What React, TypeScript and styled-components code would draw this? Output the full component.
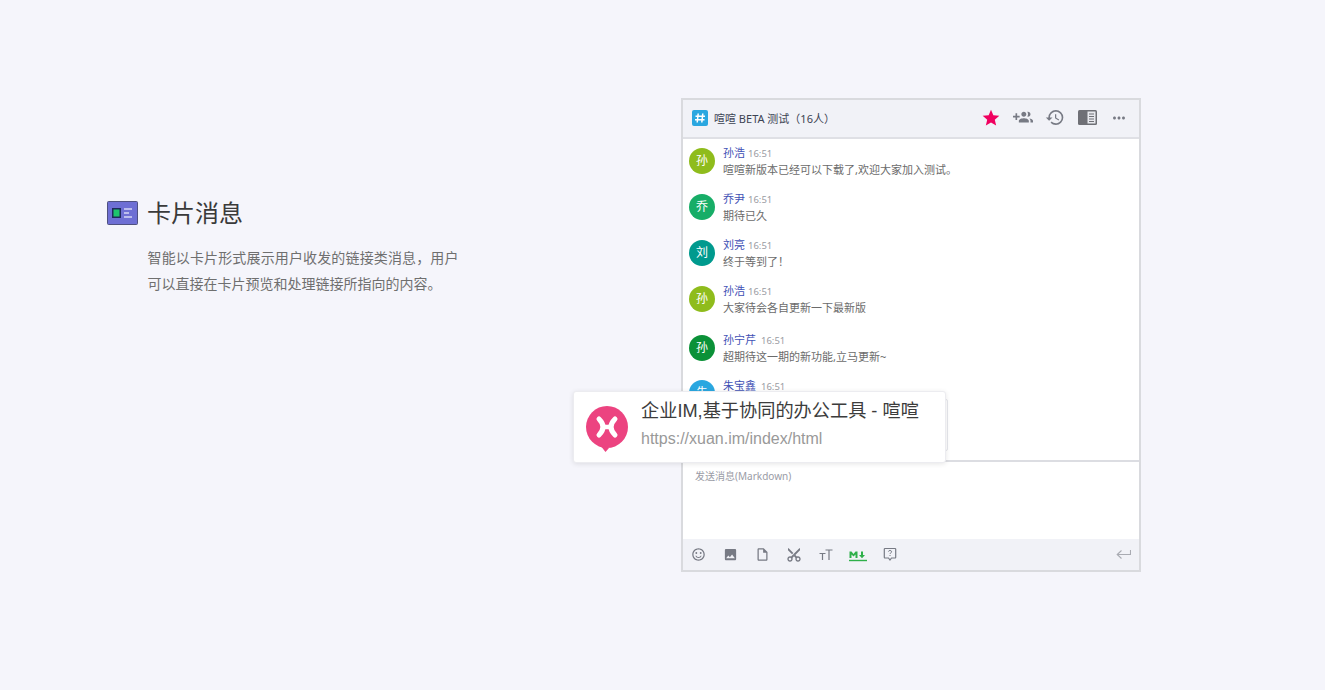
import styled, { createGlobalStyle } from 'styled-components';
import {
  MdStar,
  MdHistory,
  MdMoreHoriz,
  MdOutlineSentimentSatisfied,
  MdImage,
  MdOutlineInsertDriveFile,
  MdContentCut,
} from 'react-icons/md';

const GlobalStyle = createGlobalStyle`
  html, body {
    margin: 0;
    padding: 0;
    background: #f5f5fb;
  }
  * {
    box-sizing: border-box;
  }
`;

const chatFont = '"Noto Sans", "Noto Sans CJK SC", sans-serif';
const cardFont = '"Liberation Sans", "Noto Sans CJK SC", sans-serif';

const Page = styled.div`
  width: 1325px;
  height: 690px;
  display: flex;
  align-items: flex-start;
  padding: 98px 0 0 107px;
  background: #f5f5fb;
  overflow: hidden;
  font-family: ${chatFont};
  text-spacing-trim: space-all;
`;

const Intro = styled.section`
  width: 574px;
  padding-top: 97px;
`;

const IntroHead = styled.div`
  display: flex;
  align-items: center;
  gap: 9px;
  height: 36px;
`;

const IntroTitle = styled.h2`
  margin: 0;
  font-size: 24px;
  font-weight: 400;
  line-height: 36px;
  color: #3a3a3a;
`;

const IntroText = styled.p`
  margin: 14px 0 0 40.5px;
  width: 311px;
  font-size: 14px;
  line-height: 26px;
  color: #6f6f6f;
  text-align: justify;
`;

const ChatWindow = styled.section`
  position: relative;
  width: 460px;
  height: 474px;
  display: flex;
  flex-direction: column;
  border: 2px solid #d9dade;
  background: #fff;
`;

const ChatHeader = styled.header`
  flex: none;
  height: 39px;
  display: flex;
  align-items: center;
  padding: 0 10px 2px 9px;
  background: #f1f2f7;
  border-bottom: 2px solid #dfe0e5;
`;

const ChatTitle = styled.div`
  flex: 1;
  margin-left: 6px;
  font-size: 11px;
  color: #3c4353;
`;

const HeaderTools = styled.div`
  display: flex;
  align-items: center;
  gap: 12px;
`;

const ToolSlot = styled.span<{ $color?: string }>`
  width: 20px;
  height: 20px;
  display: flex;
  align-items: center;
  justify-content: center;
  color: ${(p) => p.$color || '#777a84'};
`;

const CutIcon = styled(MdContentCut)`
  transform: rotate(-90deg);
`;

const MessageList = styled.div`
  flex: none;
  height: 321px;
  padding: 8px 0 0 6px;
  overflow: hidden;
`;

const MessageRow = styled.div<{ $height: number }>`
  height: ${(p) => p.$height}px;
  display: flex;
  gap: 8px;
`;

const Avatar = styled.div<{ $color: string }>`
  flex: none;
  width: 26px;
  height: 26px;
  margin-top: 1px;
  border-radius: 50%;
  background: ${(p) => p.$color};
  color: #fff;
  font-size: 12px;
  line-height: 26px;
  text-align: center;
`;

const MessageBody = styled.div<{ $lift?: number }>`
  min-width: 0;
  margin-top: ${(p) => -(p.$lift ?? 2)}px;
`;

const MessageMeta = styled.div`
  display: flex;
  align-items: baseline;
  gap: 3px;
  height: 15px;
  line-height: 15px;
`;

const Sender = styled.span`
  font-size: 11px;
  color: #3f51b5;
`;

const Time = styled.span<{ $gap?: number }>`
  margin-left: ${(p) => p.$gap || 0}px;
  font-size: 9.5px;
  color: #9a9ca3;
`;

const MessageText = styled.div`
  margin-top: 1px;
  font-size: 11px;
  line-height: 17px;
  color: #6b6b6b;
  white-space: nowrap;
`;

const EmbeddedCard = styled.div`
  width: 225px;
  height: 52px;
  margin-top: 6px;
  background: #fff;
  border: 1px solid #e6e7ec;
  border-radius: 2px;
`;

const Composer = styled.div`
  flex: none;
  height: 79px;
  padding: 7px 12px;
  border-top: 2px solid #dcdde2;
  font-size: 10px;
  line-height: 15px;
  color: #9a9ca6;
`;

const ComposerBar = styled.div`
  flex: 1;
  display: flex;
  align-items: center;
  padding: 0 8px 0 5px;
  background: #f1f2f7;
`;

const BarTools = styled.div`
  flex: 1;
  display: flex;
  align-items: center;
  gap: 12px;
`;

const LinkCard = styled.div`
  position: absolute;
  left: -110px;
  top: 291px;
  width: 373px;
  height: 72px;
  display: flex;
  align-items: center;
  padding: 0 12px 0 11px;
  gap: 12px;
  background: #fff;
  border: 1px solid #ececf0;
  border-radius: 3px;
  box-shadow: 0 1px 5px rgba(0, 0, 0, 0.1);
  font-family: ${cardFont};
`;

const LinkText = styled.div`
  margin-bottom: 5px;
`;

const LinkTitle = styled.div`
  font-size: 18.2px;
  line-height: 25px;
  color: #3c3c3c;
  white-space: nowrap;
`;

const LinkUrl = styled.div`
  margin-top: 4px;
  font-size: 16px;
  line-height: 22px;
  color: #999;
`;

const LogoMark = styled.svg`
  flex: none;
  margin-top: 4px;
`;

const messages = [
  { name: '孙浩', color: '#8fbc1c', mark: '孙', text: '喧喧新版本已经可以下载了,欢迎大家加入测试。', height: 46 },
  { name: '乔尹', color: '#17ad67', mark: '乔', text: '期待已久', height: 46 },
  { name: '刘亮', color: '#009a8e', mark: '刘', text: '终于等到了！', height: 46 },
  { name: '孙浩', color: '#8fbc1c', mark: '孙', text: '大家待会各自更新一下最新版', height: 49 },
  { name: '孙宁芹', color: '#0b9138', mark: '孙', text: '超期待这一期的新功能,立马更新~', height: 45 },
];

const CardIcon = () => (
  <svg width="31" height="24" viewBox="0 0 31 24">
    <rect x="0.5" y="0.5" width="30" height="23" rx="1" fill="#6e6fd4" stroke="#4f5180" />
    <rect x="5" y="7" width="9" height="10" fill="#1f2a5a" />
    <rect x="6.5" y="8.5" width="6" height="7" fill="#1ec46c" />
    <path d="M17 8h8M17 12h5M17 16h8" stroke="#d6d7f5" strokeWidth="1.6" />
  </svg>
);

const HashIcon = () => (
  <svg width="16" height="16" viewBox="0 0 16 16">
    <rect width="16" height="16" rx="2" fill="#2aa7e0" />
    <path d="M6.2 3.5 5.2 12.5M10.8 3.5 9.8 12.5M3.5 6.3H13M3 9.8H12.5" stroke="#fff" strokeWidth="1.5" />
  </svg>
);

const GroupAddIcon = () => (
  <svg width="21" height="21" viewBox="0 0 24 24" fill="currentColor">
    <path d="M8 10H5V7H3v3H0v2h3v3h2v-3h3v-2zm10 1c1.66 0 2.99-1.34 2.99-3S19.66 5 18 5c-.32 0-.63.05-.91.13.57.81.9 1.79.9 2.87s-.34 2.06-.9 2.87c.28.08.59.13.91.13zm-5 0c1.66 0 2.99-1.34 2.99-3S14.66 5 13 5s-3 1.34-3 3 1.34 3 3 3zm6.62 2.16c.83.73 1.38 1.66 1.38 2.84v2h3v-2c0-1.54-2.37-2.49-4.38-2.84zM13 13c-2 0-6 1-6 3v2h12v-2c0-2-4-3-6-3z" />
  </svg>
);

const SplitIcon = () => (
  <svg width="19" height="15" viewBox="0 0 19 15">
    <rect width="19" height="15" rx="1.5" fill="#6f7076" />
    <rect x="9.5" y="1.5" width="8" height="12" fill="#e8e9ee" />
    <path d="M11 4h5M11 6.5h5M11 9h5M11 11.5h5" stroke="#6f7076" strokeWidth="1" />
  </svg>
);

const TextSizeIcon = () => (
  <svg width="14" height="12" viewBox="0 0 14 12" fill="none" stroke="#777a84" strokeWidth="1.2">
    <path d="M0.5 4.5h6M3.5 4.5V11M6.5 1h7M10 1v10" />
  </svg>
);

const MarkdownIcon = () => (
  <svg width="18" height="14" viewBox="0 0 18 14">
    <path d="M0.5 10V3.5h2l2 2.6 2-2.6h2V10H6.5V6.5l-2 2-2-2V10z" fill="#2fb04a" />
    <path d="M12 3.5h2V7h2l-3 3.2L10 7h2z" fill="#2fb04a" />
    <path d="M0 12.5h18" stroke="#2fb04a" strokeWidth="1.4" />
  </svg>
);

const FeedbackIcon = () => (
  <svg width="14" height="15" viewBox="0 0 14 15" fill="none">
    <path d="M2 1.5h10a.7.7 0 0 1 .7.7v8.1a.7.7 0 0 1-.7.7H8.5L7 13l-1.5-2H2a.7.7 0 0 1-.7-.7V2.2a.7.7 0 0 1 .7-.7z" stroke="#777a84" strokeWidth="1.2" />
    <path d="M5.4 4.6c.2-1.6 3.2-1.5 3.2.2 0 1.1-1.6 1.1-1.6 2.2M7 8v1" stroke="#777a84" strokeWidth="1" />
  </svg>
);

const EnterIcon = () => (
  <svg width="15" height="11" viewBox="0 0 15 11" fill="none">
    <path d="M14.5 1v4.5H1.5M5.5 1.500 1.200 5.500l4.300 4" stroke="#a9abb2" strokeWidth="1.1" />
  </svg>
);

const XuanLogo = () => (
  <LogoMark width="44" height="48" viewBox="0 0 44 48">
    <circle cx="22" cy="22" r="21" fill="#ec4380" />
    <path d="M15 40l9 3-3.500 4z" fill="#ec4380" />
    <path
      d="M14 14Q22 22 14 30M30 14Q22 22 30 30"
      stroke="#fff"
      strokeWidth="5"
      strokeLinecap="round"
      fill="none"
    />
    <path d="M17 22h10" stroke="#fff" strokeWidth="4.5" />
  </LogoMark>
);

export default function App() {
  return (
    <Page>
      <GlobalStyle />
      <Intro>
        <IntroHead>
          <CardIcon />
          <IntroTitle>卡片消息</IntroTitle>
        </IntroHead>
        <IntroText>智能以卡片形式展示用户收发的链接类消息，用户可以直接在卡片预览和处理链接所指向的内容。</IntroText>
      </Intro>
      <ChatWindow>
        <ChatHeader>
          <HashIcon />
          <ChatTitle>喧喧 BETA 测试（16人）</ChatTitle>
          <HeaderTools>
            <ToolSlot $color="#f0005f">
              <MdStar size={22} />
            </ToolSlot>
            <ToolSlot>
              <GroupAddIcon />
            </ToolSlot>
            <ToolSlot>
              <MdHistory size={21} />
            </ToolSlot>
            <ToolSlot>
              <SplitIcon />
            </ToolSlot>
            <ToolSlot>
              <MdMoreHoriz size={18} />
            </ToolSlot>
          </HeaderTools>
        </ChatHeader>
        <MessageList>
          {messages.map((m) => (
            <MessageRow key={m.name + m.text} $height={m.height}>
              <Avatar $color={m.color}>{m.mark}</Avatar>
              <MessageBody>
                <MessageMeta>
                  <Sender>{m.name}</Sender>
                  <Time $gap={m.name.length > 2 ? 2 : 0}>16:51</Time>
                </MessageMeta>
                <MessageText>{m.text}</MessageText>
              </MessageBody>
            </MessageRow>
          ))}
          <MessageRow $height={80}>
            <Avatar $color="#2aa7e0">朱</Avatar>
            <MessageBody $lift={1}>
              <MessageMeta>
                <Sender>朱宝鑫</Sender>
                <Time $gap={2}>16:51</Time>
              </MessageMeta>
              <EmbeddedCard />
            </MessageBody>
          </MessageRow>
        </MessageList>
        <Composer>发送消息(Markdown)</Composer>
        <ComposerBar>
          <BarTools>
            <ToolSlot>
              <MdOutlineSentimentSatisfied size={15} />
            </ToolSlot>
            <ToolSlot>
              <MdImage size={15} />
            </ToolSlot>
            <ToolSlot>
              <MdOutlineInsertDriveFile size={15} />
            </ToolSlot>
            <ToolSlot>
              <CutIcon size={16} />
            </ToolSlot>
            <ToolSlot>
              <TextSizeIcon />
            </ToolSlot>
            <ToolSlot>
              <MarkdownIcon />
            </ToolSlot>
            <ToolSlot>
              <FeedbackIcon />
            </ToolSlot>
          </BarTools>
          <EnterIcon />
        </ComposerBar>
        <LinkCard>
          <XuanLogo />
          <LinkText>
            <LinkTitle>企业IM,基于协同的办公工具 - 喧喧</LinkTitle>
            <LinkUrl>https://xuan.im/index/html</LinkUrl>
          </LinkText>
        </LinkCard>
      </ChatWindow>
    </Page>
  );
}
